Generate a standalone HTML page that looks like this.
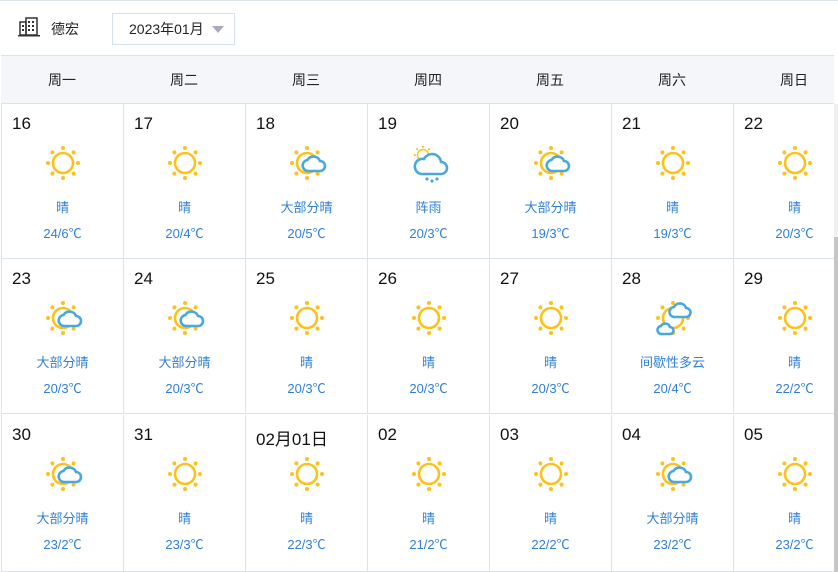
<!DOCTYPE html>
<html><head><meta charset="utf-8"><style>
body{margin:0;width:838px;height:572px;overflow:hidden;background:#fff;font-family:"Liberation Sans","Noto Sans CJK SC",sans-serif;position:relative}
.top{position:absolute;left:0;top:0;width:838px;height:55px;border-top:1px solid #dde5ec;box-sizing:border-box}
.sel{position:absolute;left:112px;top:12px;width:123px;height:32px;border:1px solid #d4e1ea;box-sizing:border-box;font-size:14px;line-height:30px;padding-left:16px;color:#222}
.sel:after{content:"";position:absolute;right:10px;top:12px;border:6px solid transparent;border-top:7px solid #aab;border-bottom:0}
.wrap{position:absolute;left:0;top:55px;width:834px;height:517px;overflow:hidden}
.hdr{position:absolute;left:1px;top:0;width:860px;height:49px;background:#f4f6f9;border-top:1px solid #dbe3ea;border-bottom:1px solid #dbe3ea;box-sizing:border-box}
.hd{position:absolute;top:0;width:122px;line-height:48px;text-align:center;font-size:14px;color:#222}
.c{position:absolute;width:122px;height:156px;border-left:1px solid #dbe4ec;border-bottom:1px solid #dbe4ec;box-sizing:border-box}
.d{position:absolute;left:10px;top:10px;font-size:17px;color:#111}
.ic{position:absolute;left:41px;top:39px}
.t{position:absolute;left:0;width:100%;text-align:center;font-size:13px;color:#2f7fd4}
.t1{top:93px}.t2{top:119px}
.sb{position:absolute;left:834px;top:104px;width:4px;height:468px;background:#f0f0f0}
.sb div{position:absolute;top:133px;width:4px;height:335px;background:#c6c6c6}
</style></head><body>
<div class="top">
<svg style="position:absolute;left:18px;top:16px" width="22" height="20" viewBox="0 0 22 20"><rect x="2" y="5" width="6" height="13" fill="none" stroke="#333" stroke-width="1.5"/><rect x="8" y="1" width="11" height="17" fill="none" stroke="#333" stroke-width="1.5"/><g fill="#333"><rect x="4" y="8" width="2" height="2"/><rect x="4" y="12" width="2" height="2"/><rect x="10" y="4" width="2" height="2"/><rect x="14" y="4" width="2" height="2"/><rect x="10" y="8" width="2" height="2"/><rect x="14" y="8" width="2" height="2"/><rect x="10" y="12" width="2" height="2"/><rect x="14" y="12" width="2" height="2"/></g><rect x="0" y="18" width="22" height="1.5" fill="#333"/></svg>
<div style="position:absolute;left:51px;top:18px;font-size:14px;color:#222">德宏</div>
<div class="sel">2023年01月</div>
</div>
<div class="sb"><div></div></div>
<svg width="0" height="0" style="position:absolute">
<defs>
<g id="sun"><circle cx="20" cy="20" r="10" fill="none" stroke="#fcc21b" stroke-width="2.6"/><g fill="#fcc21b"><circle cx="20" cy="5" r="2"/><circle cx="20" cy="35" r="2"/><circle cx="5" cy="20" r="2"/><circle cx="35" cy="20" r="2"/><circle cx="9.4" cy="9.4" r="2"/><circle cx="30.6" cy="9.4" r="2"/><circle cx="9.4" cy="30.6" r="2"/><circle cx="30.6" cy="30.6" r="2"/></g></g>
<g id="cl"><path d="M22 28h11a5 5 0 0 0 0-10 7 7 0 0 0-12.5-1 5.5 5.5 0 0 0 1.5 11z" fill="#fff" stroke="#4aa8e0" stroke-width="2.6"/></g>
</defs></svg>
<div class="wrap">
<div class="hdr">
<div class="hd" style="left:0">周一</div><div class="hd" style="left:122px">周二</div><div class="hd" style="left:244px">周三</div><div class="hd" style="left:366px">周四</div><div class="hd" style="left:488px">周五</div><div class="hd" style="left:610px">周六</div><div class="hd" style="left:732px">周日</div>
</div>
<div id="g"></div>
</div>
<script>
var rows=[
[["16","s","晴","24/6℃"],["17","s","晴","20/4℃"],["18","p","大部分晴","20/5℃"],["19","r","阵雨","20/3℃"],["20","p","大部分晴","19/3℃"],["21","s","晴","19/3℃"],["22","s","晴","20/3℃"]],
[["23","p","大部分晴","20/3℃"],["24","p","大部分晴","20/3℃"],["25","s","晴","20/3℃"],["26","s","晴","20/3℃"],["27","s","晴","20/3℃"],["28","i","间歇性多云","20/4℃"],["29","s","晴","22/2℃"]],
[["30","p","大部分晴","23/2℃"],["31","s","晴","23/3℃"],["02月01日","s","晴","22/3℃"],["02","s","晴","21/2℃"],["03","s","晴","22/2℃"],["04","p","大部分晴","23/2℃"],["05","s","晴","23/2℃"]]];
var icons={
s:'<use href="#sun"/>',
p:'<use href="#sun"/><use href="#cl"/>',
r:'<g transform="translate(3 1) scale(.55)"><use href="#sun"/></g><path d="M12 31h20a6 6 0 0 0 0-12 9 9 0 0 0-17-3 7.5 7.5 0 0 0-3 15z" fill="#fff" stroke="#4aa8e0" stroke-width="2.6"/><g fill="#4aa8e0"><circle cx="18" cy="36" r="1.6"/><circle cx="23" cy="38" r="1.6"/><circle cx="28" cy="36" r="1.6"/></g>',
i:'<use href="#sun"/><path d="M22 19h11a4.5 4.5 0 0 0 0-9 6.5 6.5 0 0 0-12-1 5 5 0 0 0 1 10z" fill="#fff" stroke="#4aa8e0" stroke-width="2.6"/><path d="M9 36h8a3.5 3.5 0 0 0 0-7 5 5 0 0 0-9-1 4 4 0 0 0 1 8z" fill="#fff" stroke="#4aa8e0" stroke-width="2.6"/>'};
var h='';
rows.forEach(function(r,ri){r.forEach(function(c,ci){
var x=1+122*ci,y=[49,204,360][ri];var w=122;
h+='<div class="c" style="left:'+x+'px;top:'+y+'px;height:'+(ri==2?157:155)+'px"><div class="d">'+c[0]+'</div><svg class="ic" width="40" height="40" viewBox="0 0 40 40">'+icons[c[1]]+'</svg><div class="t t1">'+c[2]+'</div><div class="t t2">'+c[3]+'</div></div>';
});});
document.getElementById('g').innerHTML=h;
</script>
</body></html>
